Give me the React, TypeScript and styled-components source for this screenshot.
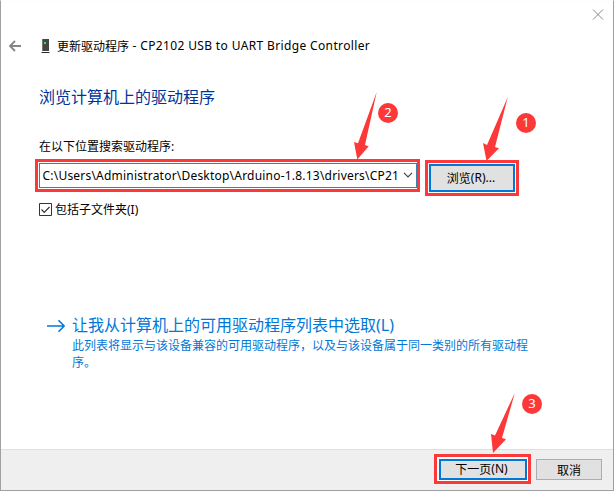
import React from 'react';
import styled, { createGlobalStyle } from 'styled-components';

const RED = '#fd3838';
const BLUE = '#0078d7';

const GlobalStyle = createGlobalStyle`
  * { box-sizing: border-box; }
  body { margin: 0; background: #fff; }
`;

const Dialog = styled.div`
  position: relative;
  display: flex;
  flex-direction: column;
  width: 614px;
  height: 491px;
  overflow: hidden;
  background: #fff;
  border: 1px solid #a0a0a0;
  border-top-color: #fdfdfd;
  color: #000;
  font: 12px/17px 'Noto Sans CJK SC', 'Noto Sans', sans-serif;
  white-space: nowrap;
`;

const Latin = styled.span<{ $size?: number; $spacing?: number }>`
  font-family: 'Noto Sans', sans-serif;
  font-size: ${(p) => p.$size ?? 12}px;
  letter-spacing: ${(p) => p.$spacing ?? 0}px;
`;

const TitleBar = styled.div`
  display: flex;
  justify-content: flex-end;
  height: 29px;
  padding: 7px 9px 0 0;
`;

const Header = styled.div`
  display: flex;
  align-items: center;
  height: 31px;
  padding-left: 7px;
`;

const DeviceSlot = styled.span`
  display: flex;
  margin: 0 7px 0 18px;
`;

const Body = styled.main`
  flex: 1;
  padding: 22px 0 0 38px;
`;

const Heading = styled.h1`
  margin: 1px 0 0;
  height: 24px;
  font-size: 16px;
  line-height: 24px;
  font-weight: 400;
  color: #003399;
`;

const Label = styled.div`
  margin-top: 29px;
  height: 17px;
`;

const FieldRow = styled.div`
  display: flex;
  align-items: flex-start;
  gap: 5px;
  margin: 5px 0 0 -4px;
`;

const Highlight = styled.div<{ $w: number; $h: number; $top?: number }>`
  display: flex;
  align-items: center;
  justify-content: center;
  flex: none;
  width: ${(p) => p.$w}px;
  height: ${(p) => p.$h}px;
  margin-top: ${(p) => p.$top ?? 0}px;
  border: 3px solid ${RED};
  background: #fff;
`;

const PathField = styled.div`
  display: flex;
  align-items: center;
  justify-content: space-between;
  width: 378px;
  height: 25px;
  padding: 0 3px 1px 3px;
  border: 1px solid #3e7fae;
`;

const Button = styled.button<{ $w: number; $h: number; $focused?: boolean }>`
  display: flex;
  align-items: center;
  justify-content: center;
  width: ${(p) => p.$w}px;
  height: ${(p) => p.$h}px;
  padding: 0 ${(p) => (p.$focused ? 2 : 0)}px 1px 0;
  border: ${(p) => (p.$focused ? `2px solid ${BLUE}` : '1px solid #adadad')};
  background: #e1e1e1;
  color: #000;
  font: inherit;
`;

const CheckRow = styled.div`
  display: flex;
  align-items: center;
  gap: 3px;
  height: 17px;
  margin-top: 5px;
`;

const CheckText = styled.span`
  margin-top: -1px;
`;

const CommandLink = styled.div`
  display: flex;
  gap: 7px;
  margin: 94px 0 0 8px;
  color: ${BLUE};
`;

const LinkIcon = styled.span`
  display: flex;
  width: 18px;
  padding-top: 7px;
`;

const LinkTitle = styled.div`
  height: 24px;
  font-size: 16px;
  line-height: 24px;
`;

const LinkNote = styled.div`
  width: 460px;
  white-space: normal;
`;

const Footer = styled.footer`
  display: flex;
  align-items: flex-start;
  justify-content: flex-end;
  gap: 5px;
  height: 41px;
  padding: 4px 11px 0 0;
  border-top: 1px solid #dfdfdf;
  background: #efefef;
`;

const CancelSlot = styled.div`
  margin-top: 5px;
`;

const ArrowLayer = styled.svg`
  position: absolute;
  top: -1px;
  left: -1px;
  pointer-events: none;
`;

const Badge = styled.span<{ $x: number; $y: number }>`
  position: absolute;
  left: ${(p) => p.$x - 11}px;
  top: ${(p) => p.$y - 11}px;
  width: 20px;
  height: 20px;
  border-radius: 50%;
  background: ${RED};
  color: #fff;
  text-align: center;
  font: 13px/19px 'Noto Sans', sans-serif;
`;

const arrows = [
  '507.8,97 495,147 499,148.3 486.5,161 483,143 487,145',
  '376.7,92 365,145 368.7,146.3 357.3,159.5 354,142 358,143.3',
  '514.8,393 502,438 506,439.3 493,453 491,434 495,435.5',
];

const badges = [
  { n: 1, x: 526, y: 123 },
  { n: 2, x: 388, y: 113 },
  { n: 3, x: 532, y: 404 },
];

export default function App() {
  return (
    <>
      <GlobalStyle />
      <Dialog>
        <TitleBar>
          <svg width="12" height="12" viewBox="0 0 12 12" stroke="#888" fill="none">
            <path d="M1 1.5 11 11.5M11 1.5 1 11.5" />
          </svg>
        </TitleBar>
        <Header>
          <svg width="14" height="12" viewBox="0 0 14 12" stroke="#858585" strokeWidth="1.8" fill="none">
            <path d="M13 6H2M7 1 2 6l5 5" />
          </svg>
          <DeviceSlot>
            <svg width="10" height="16" viewBox="0 0 10 16">
              <path fill="#454545" d="M2 1h7v12H2z" />
              <path fill="#777" d="M2 1h1v12H2z" />
              <path fill="#292929" d="M2 14h7l1 1H1z" />
              <path fill="#35e747" d="M4 4h2v2H4z" />
            </svg>
          </DeviceSlot>
          <span>更新驱动程序</span>
          <Latin $spacing={0.36}>&nbsp;- CP2102 USB to UART Bridge Controller</Latin>
        </Header>
        <Body>
          <Heading>浏览计算机上的驱动程序</Heading>
          <Label>在以下位置搜索驱动程序<Latin>:</Latin></Label>
          <FieldRow>
            <Highlight $w={385} $h={33}>
              <PathField>
                <Latin $spacing={0.21}>C:\Users\Administrator\Desktop\Arduino-1.8.13\drivers\CP21</Latin>
                <svg width="10" height="6" viewBox="0 0 10 6" stroke="#444" strokeWidth="1.2" fill="none">
                  <path d="m1 .8 4 4 4-4" />
                </svg>
              </PathField>
            </Highlight>
            <Highlight $w={94} $h={36} $top={1}>
              <Button $w={86} $h={28} $focused>浏览<Latin>(R)...</Latin></Button>
            </Highlight>
          </FieldRow>
          <CheckRow>
            <svg width="13" height="13" viewBox="0 0 13 13" fill="none" stroke="#333">
              <path d="M.5.5h12v12H.5z" />
              <path d="m2.5 6.5 2.7 2.8L10.5 4" strokeWidth="1.2" />
            </svg>
            <CheckText>包括子文件夹<Latin>(I)</Latin></CheckText>
          </CheckRow>
          <CommandLink>
            <LinkIcon>
              <svg width="18" height="14" viewBox="0 0 18 14" stroke={BLUE} strokeWidth="1.6" fill="none">
                <path d="M0 7h17M11.5 1.2 17.2 7l-5.7 5.8" />
              </svg>
            </LinkIcon>
            <div>
              <LinkTitle>让我从计算机上的可用驱动程序列表中选取<Latin $size={16}>(L)</Latin></LinkTitle>
              <LinkNote>此列表将显示与该设备兼容的可用驱动程序，以及与该设备属于同一类别的所有驱动程<br />序。</LinkNote>
            </div>
          </CommandLink>
        </Body>
        <Footer>
          <Highlight $w={97} $h={30}>
            <Button $w={88} $h={21} $focused>下一页<Latin>(N)</Latin></Button>
          </Highlight>
          <CancelSlot>
            <Button $w={66} $h={21}>取消</Button>
          </CancelSlot>
        </Footer>
        <ArrowLayer width="614" height="491" viewBox="0 0 614 491">
          {arrows.map((points) => (
            <polygon key={points} points={points} fill={RED} />
          ))}
        </ArrowLayer>
        {badges.map((b) => (
          <Badge key={b.n} $x={b.x} $y={b.y}>{b.n}</Badge>
        ))}
      </Dialog>
    </>
  );
}
